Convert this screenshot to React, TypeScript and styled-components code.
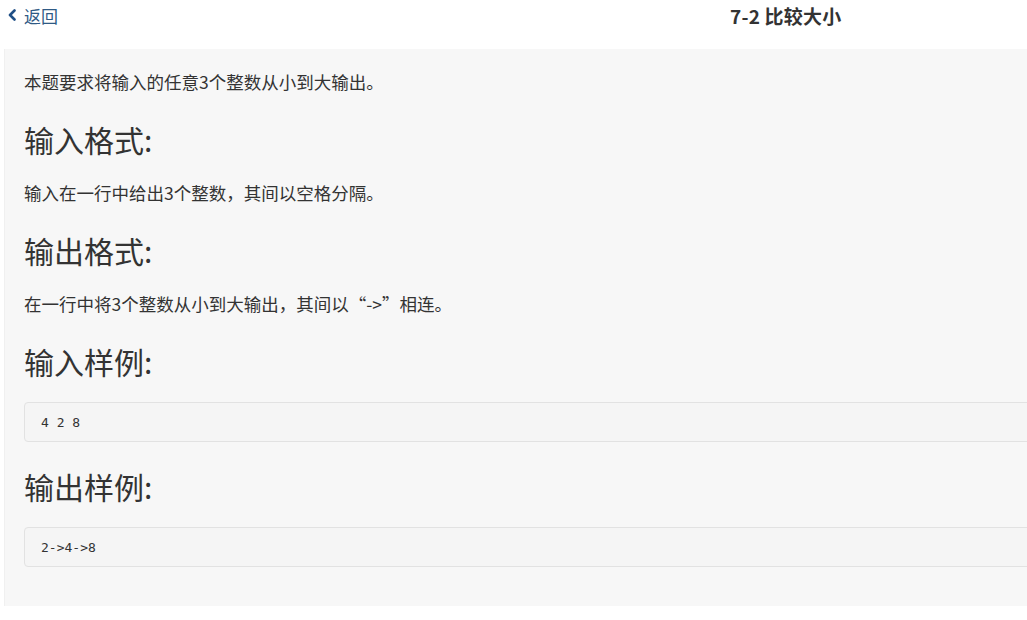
import React from "react";
import styled, { createGlobalStyle } from "styled-components";

const Global = createGlobalStyle`
  html, body {
    margin: 0;
    padding: 0;
    overflow: hidden;
    background: #ffffff;
  }
  body {
    font-family: "Noto Sans CJK SC", "Noto Sans", sans-serif;
    color: #333333;
  }
`;

const Page = styled.div`
  width: 1100px;
`;

const Header = styled.header`
  display: grid;
  grid-template-columns: 730px auto;
  align-items: center;
  height: 30px;
  padding-bottom: 19px;
`;

const BackLink = styled.a`
  display: flex;
  align-items: center;
  gap: 7px;
  padding-left: 8px;
  color: #2f5a85;
  font-size: 17px;
  text-decoration: none;
  line-height: 1;
  cursor: pointer;
`;

const Title = styled.h1`
  margin: 0;
  font-size: 19px;
  font-weight: 700;
  color: #333333;
  line-height: 1;
  letter-spacing: 0.2px;
`;

const Panel = styled.main`
  margin-left: 4px;
  background: #f7f7f7;
  border-left: 1px solid #f0f0f0;
  padding: 20px 19px 13px;
`;

const Para = styled.p`
  margin: 0;
  font-size: 17.5px;
  line-height: 26px;
  color: #333333;
`;

const Heading = styled.h3`
  margin: 26px 0 23px;
  font-size: 30px;
  line-height: 36px;
  font-weight: 400;
  color: #333333;
`;

const Code = styled.pre`
  margin: 0 0 26px;
  height: 40px;
  box-sizing: border-box;
  display: flex;
  align-items: center;
  padding: 0 16px;
  background: #f5f5f5;
  border: 1px solid #e2e2e2;
  border-radius: 4px;
  font-family: "DejaVu Sans Mono", "Liberation Mono", monospace;
  font-size: 13px;
  color: #333333;
  white-space: pre;
`;

const Chevron = () => (
  <svg width="9" height="12" viewBox="0 0 9 12">
    <polyline
      points="6.5,1.5 2,6 6.5,10.5"
      fill="none"
      stroke="#1f4f86"
      strokeWidth="2.6"
      strokeLinecap="round"
      strokeLinejoin="round"
    />
  </svg>
);

export default function App() {
  return (
    <Page>
      <Global />
      <Header>
        <BackLink>
          <Chevron />
          返回
        </BackLink>
        <Title>7-2 比较大小</Title>
      </Header>
      <Panel>
        <Para>本题要求将输入的任意3个整数从小到大输出。</Para>
        <Heading>输入格式:</Heading>
        <Para>输入在一行中给出3个整数，其间以空格分隔。</Para>
        <Heading>输出格式:</Heading>
        <Para>在一行中将3个整数从小到大输出，其间以“-&gt;”相连。</Para>
        <Heading>输入样例:</Heading>
        <Code>4 2 8</Code>
        <Heading>输出样例:</Heading>
        <Code>2-&gt;4-&gt;8</Code>
      </Panel>
    </Page>
  );
}
